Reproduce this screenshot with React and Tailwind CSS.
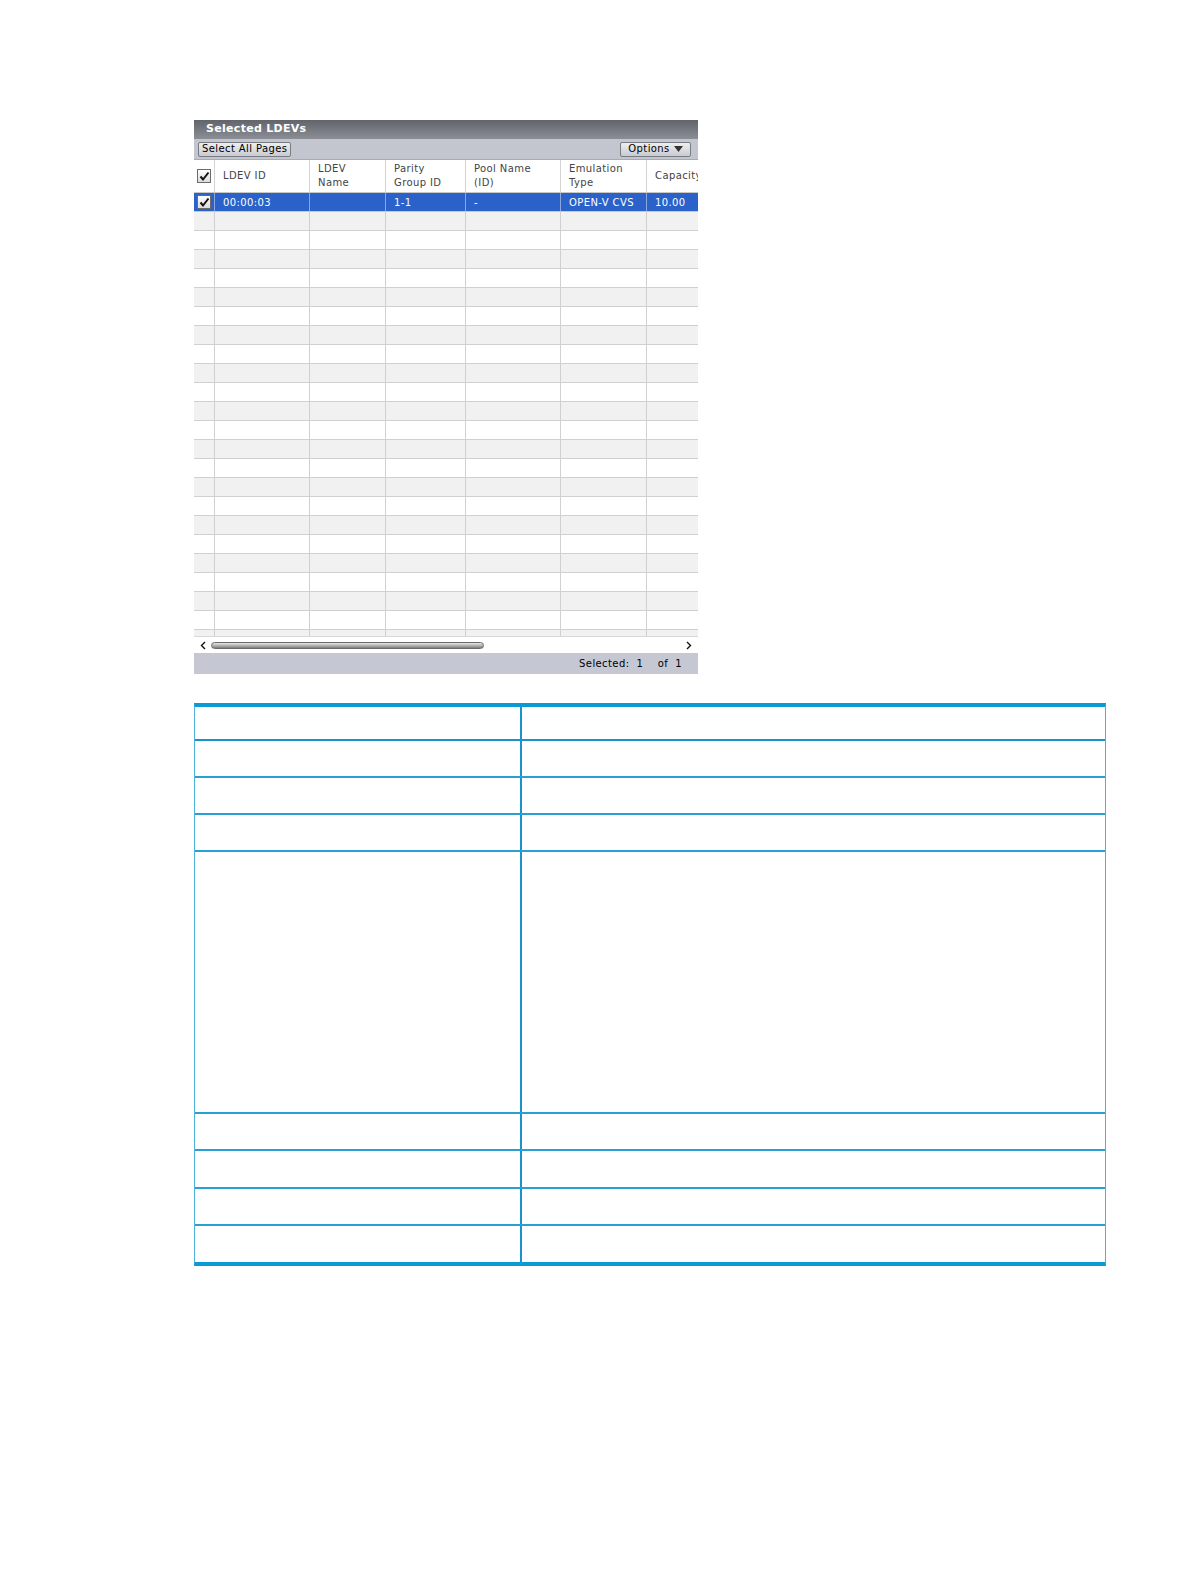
import React from 'react';

const COLS = [
  { key: 'chk', w: 'w-[21px]' },
  { key: 'id', w: 'w-[95px]', label: ['LDEV ID'] },
  { key: 'name', w: 'w-[76px]', label: ['LDEV', 'Name'] },
  { key: 'pg', w: 'w-[80px]', label: ['Parity', 'Group ID'] },
  { key: 'pool', w: 'w-[95px]', label: ['Pool Name', '(ID)'] },
  { key: 'emu', w: 'w-[86px]', label: ['Emulation', 'Type'] },
  { key: 'cap', w: 'w-[51px]', label: ['Capacity'] },
];

const SELECTED = ['00:00:03', '', '1-1', '-', 'OPEN-V CVS', '10.00'];

const font = { fontFamily: '"DejaVu Sans", Verdana, sans-serif' };

function Check() {
  return (
    <span className="flex h-[14px] w-[14px] items-center justify-center border border-[#6b6b6b] bg-gradient-to-b from-white to-[#dcdcdc]">
      <svg width="11" height="11" viewBox="0 0 11 11">
        <path d="M1.5 5.5 L4 8.5 L9.5 1.5" fill="none" stroke="#111" strokeWidth="2" />
      </svg>
    </span>
  );
}

function LdevPanel() {
  const blanks = Array.from({ length: 23 });
  return (
    <div className="w-[504px] text-[10px] tracking-[0.4px] text-[#333]" style={font}>
      <div className="flex h-[19px] items-center bg-gradient-to-b from-[#62646c] to-[#8c8e96] pl-3 text-[11px] font-bold tracking-[0.3px] text-white">
        Selected LDEVs
      </div>
      <div className="flex h-[21px] items-center justify-between border-b border-[#a8aab4] bg-[#c3c5cf] px-1">
        <button className="h-[15px] rounded-[2px] border border-[#7a7c84] bg-gradient-to-b from-[#eeeeef] to-[#c9cbd2] px-[3px] text-[10px] leading-none tracking-[0.4px] text-black">
          Select All Pages
        </button>
        <button className="mr-[3px] flex h-[15px] w-[71px] items-center justify-center gap-1 rounded-[2px] border border-[#7a7c84] bg-gradient-to-b from-[#eeeeef] to-[#c9cbd2] text-[10px] leading-none tracking-[0.4px] text-black">
          Options
          <svg width="9" height="6" viewBox="0 0 9 6"><path d="M0 0 H9 L4.5 6 Z" fill="#333" /></svg>
        </button>
      </div>
      <div className="h-[476px] overflow-hidden bg-white">
        <div className="flex h-[33px] border-b border-[#c8c8c8] bg-white">
          {COLS.map((c, i) => (
            <div key={c.key} className={`${c.w} shrink-0 overflow-hidden ${i < COLS.length - 1 ? 'border-r border-[#d4d4d4]' : ''} flex flex-col justify-center ${i === 0 ? 'items-center' : 'pl-2'} leading-[14px] text-[#444]`}>
              {i === 0 ? <Check /> : c.label.map(l => <span key={l} className="whitespace-nowrap">{l}</span>)}
            </div>
          ))}
        </div>
        <div className="flex h-[19px] border-b border-[#c8c8c8] bg-[#2a62c9] text-white">
          {COLS.map((c, i) => (
            <div key={c.key} className={`${c.w} shrink-0 ${i < COLS.length - 1 ? 'border-r border-[#8aa6dc]' : ''} flex items-center ${i === 0 ? 'justify-center' : 'pl-2'} whitespace-nowrap`}>
              {i === 0 ? <Check /> : SELECTED[i - 1]}
            </div>
          ))}
        </div>
        {blanks.map((_, r) => (
          <div key={r} className={`flex h-[19px] shrink-0 border-b border-[#d0d0d0] ${r % 2 === 0 ? 'bg-[#f1f1f1]' : 'bg-white'}`}>
            {COLS.map((c, i) => (
              <div key={c.key} className={`${c.w} shrink-0 ${i < COLS.length - 1 ? 'border-r border-[#d0d0d0]' : ''}`} />
            ))}
          </div>
        ))}
      </div>
      <div className="flex h-[17px] items-center gap-[5px] border-t border-[#d8d8d8] bg-white px-[6px]">
        <svg width="6" height="9" viewBox="0 0 6 9"><path d="M5 1 L1.5 4.5 L5 8" fill="none" stroke="#111" strokeWidth="1.4" /></svg>
        <div className="h-[7px] w-[273px] rounded-full border border-[#6a6a6a] bg-gradient-to-b from-[#e6e6e6] via-[#b4b4b4] to-[#7c7c7c]" />
        <div className="flex-1" />
        <svg width="6" height="9" viewBox="0 0 6 9"><path d="M1 1 L4.5 4.5 L1 8" fill="none" stroke="#111" strokeWidth="1.4" /></svg>
      </div>
      <div className="flex h-[21px] items-center justify-end bg-[#c5c7d3] pr-4 text-[10px] text-black">
        <span className="whitespace-pre">Selected:  1    of  1</span>
      </div>
    </div>
  );
}

const ROWS = [37, 37, 37, 262, 37, 38, 37, 36];

function DescTable() {
  return (
    <div className="w-[912px] border-x border-[#4fb0dc] border-y-4 border-y-[#0a9ad4]">
      <div className="flex h-[34px] border-b-2 border-[#1a94c8]">
        <div className="w-[327px] border-r-2 border-[#1a94c8]" />
        <div className="flex-1" />
      </div>
      {ROWS.map((h, i) => (
        <div key={i} className={`flex ${i < ROWS.length - 1 ? 'border-b-2 border-[#2aa0d2]' : ''}`} style={{ height: h }}>
          <div className="w-[327px] border-r-2 border-[#1a94c8]" />
          <div className="flex-1" />
        </div>
      ))}
    </div>
  );
}

export default function App() {
  return (
    <div className="h-screen overflow-hidden bg-white pl-[194px] pt-[120px]">
      <LdevPanel />
      <div className="mt-[29px]">
        <DescTable />
      </div>
    </div>
  );
}
